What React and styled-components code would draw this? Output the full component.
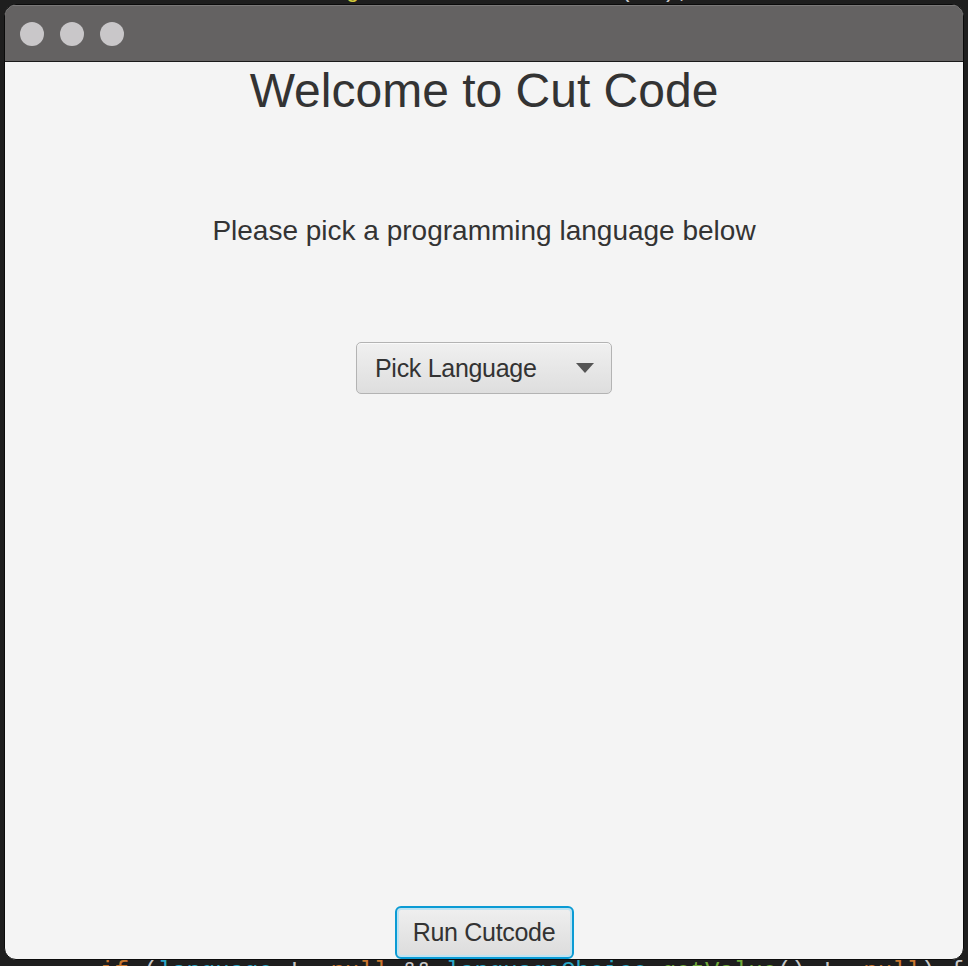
import React from 'react';
import styled, { createGlobalStyle } from 'styled-components';

const GlobalStyle = createGlobalStyle`
  html, body {
    margin: 0;
    padding: 0;
    background: #1e1e1e;
  }
`;

const Desktop = styled.div`
  position: relative;
  width: 968px;
  height: 966px;
  overflow: hidden;
  background-color: #1e1e1e;
`;

const CodeBackdrop = styled.div`
  height: 100%;
  display: flex;
  flex-direction: column;
  justify-content: space-between;
  font-family: "Liberation Mono", "DejaVu Sans Mono", monospace;
  font-size: 24px;
  line-height: 30px;
  color: #c8c8c8;
  white-space: pre;
`;

const CodeLine = styled.div`
  padding-left: ${(p) => p.$indent}px;
  margin-top: ${(p) => p.$top || 0}px;
  margin-bottom: ${(p) => p.$bottom || 0}px;
`;

const Tok = styled.span`
  color: ${(p) => p.$c};
`;

const Window = styled.div`
  position: absolute;
  top: 4px;
  left: 4px;
  width: 960px;
  height: 956px;
  display: flex;
  flex-direction: column;
  border: 1px solid #0b0b0b;
  border-radius: 12px;
  overflow: hidden;
  background-color: #f4f4f4;
  box-sizing: border-box;
`;

const TitleBar = styled.div`
  height: 55px;
  flex-shrink: 0;
  display: flex;
  align-items: center;
  gap: 16px;
  padding-left: 15px;
  background-color: #646262;
  border-top: 1px solid #7a7878;
  border-bottom: 1px solid #1a1a1a;
`;

const Light = styled.span`
  width: 24px;
  height: 24px;
  border-radius: 50%;
  background-color: #c9c7c9;
`;

const Content = styled.div`
  flex: 1;
  display: flex;
  flex-direction: column;
  align-items: center;
  font-family: "Liberation Sans", Arial, sans-serif;
  color: #333333;
`;

const Heading = styled.h1`
  margin: 1px 0 0;
  font-size: 48px;
  font-weight: 400;
  line-height: 55px;
`;

const Subtitle = styled.p`
  margin: 97px 0 0;
  font-size: 28px;
  line-height: 32px;
`;

const Select = styled.button`
  margin-top: 95px;
  width: 256px;
  height: 52px;
  display: flex;
  align-items: center;
  justify-content: space-between;
  padding: 0 17px 0 18px;
  box-sizing: border-box;
  border: 1px solid #b3b3b3;
  border-radius: 5px;
  background: linear-gradient(#f0f0f0, #dedede);
  box-shadow: inset 0 1px 0 #fafafa;
  font-family: "Liberation Sans", Arial, sans-serif;
  font-size: 25px;
  letter-spacing: -0.3px;
  color: #333333;
  cursor: pointer;
`;

const Arrow = styled.span`
  width: 0;
  height: 0;
  border-left: 9px solid transparent;
  border-right: 9px solid transparent;
  border-top: 10px solid #555555;
`;

const Spacer = styled.div`
  flex: 1;
`;

const RunButton = styled.button`
  width: 179px;
  height: 53px;
  padding: 0;
  box-sizing: border-box;
  border: 2px solid #0a9bd4;
  border-radius: 6px;
  background: linear-gradient(#efefef, #dcdcdc);
  box-shadow: inset 0 0 0 2px #bfe3f2;
  font-family: "Liberation Sans", Arial, sans-serif;
  font-size: 25px;
  letter-spacing: -0.3px;
  color: #333333;
  cursor: pointer;
`;

export default function App() {
  return (
    <>
      <GlobalStyle />
      <Desktop>
        <CodeBackdrop>
          <CodeLine $indent={158} $top={-24}>
            <Tok $c="#2aa6c8">button</Tok>.<Tok $c="#d0c83a">setAlignment</Tok> = <Tok $c="#c8762e">new</Tok> <Tok $c="#6fa83a">Button</Tok>("");
          </CodeLine>
          <CodeLine $indent={100} $bottom={-21}>
            <Tok $c="#c8762e">if</Tok> (<Tok $c="#2aa6c8">language</Tok> != <Tok $c="#c8762e">null</Tok> && <Tok $c="#2aa6c8">languageChoice</Tok>.<Tok $c="#6fa83a">getValue</Tok>() != <Tok $c="#c8762e">null</Tok>) {'{'}
          </CodeLine>
        </CodeBackdrop>
        <Window>
          <TitleBar>
            <Light />
            <Light />
            <Light />
          </TitleBar>
          <Content>
            <Heading>Welcome to Cut Code</Heading>
            <Subtitle>Please pick a programming language below</Subtitle>
            <Select>
              Pick Language
              <Arrow />
            </Select>
            <Spacer />
            <RunButton>Run Cutcode</RunButton>
          </Content>
        </Window>
      </Desktop>
    </>
  );
}
